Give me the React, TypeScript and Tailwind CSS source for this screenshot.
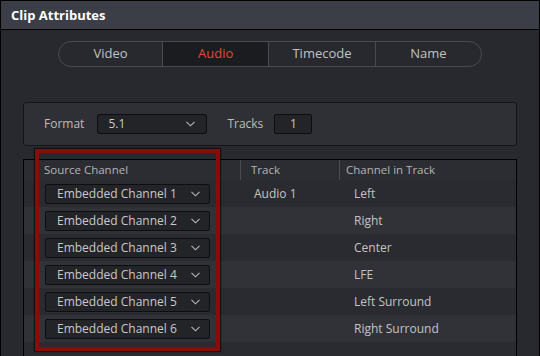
import React from 'react';

const Chevron = () => (
  <svg width="9" height="6" viewBox="0 0 9 6" className="shrink-0">
    <polyline points="0.5,0.8 4.5,4.8 8.5,0.8" fill="none" stroke="#b8b8b8" strokeWidth="1.1" />
  </svg>
);

const Select = ({ value, className }: { value: string; className: string }) => (
  <div
    className={`flex items-center justify-between h-[20px] bg-[#232428] border border-[#0e0e10] rounded-[2px] text-[12px] text-[#c9c9c9] ${className}`}
  >
    <span className="leading-none">{value}</span>
    <Chevron />
  </div>
);

const tabs = ['Video', 'Audio', 'Timecode', 'Name'];

const rows = [
  { src: 'Embedded Channel 1', track: 'Audio 1', ch: 'Left' },
  { src: 'Embedded Channel 2', track: '', ch: 'Right' },
  { src: 'Embedded Channel 3', track: '', ch: 'Center' },
  { src: 'Embedded Channel 4', track: '', ch: 'LFE' },
  { src: 'Embedded Channel 5', track: '', ch: 'Left Surround' },
  { src: 'Embedded Channel 6', track: '', ch: 'Right Surround' },
];

export default function App() {
  return (
    <div className="relative w-[540px] h-[356px] overflow-hidden bg-[#28292e] border-x border-t border-black font-['Open_Sans',sans-serif] flex flex-col">
      <header className="h-[29px] shrink-0 bg-[#3b3e47] border-b border-black flex items-center pl-[10px]">
        <h1 className="text-[13px] font-bold text-white leading-none">Clip Attributes</h1>
      </header>

      <div className="flex justify-center pt-[11px]">
        <div className="flex w-[424px] h-[26px] border border-[#4a4b51] rounded-full overflow-hidden">
          {tabs.map((t, i) => (
            <div
              key={t}
              className={`flex items-center justify-center text-[13px] ${
                i === 0 ? 'w-[103px]' : 'flex-1'
              } ${i > 0 ? 'border-l border-[#4a4b51]' : ''} ${
                t === 'Audio' ? 'bg-[#1b1c1f] text-[#e8463a]' : 'text-[#c2c2c2]'
              }`}
            >
              {t}
            </div>
          ))}
        </div>
      </div>

      <div className="mx-[22px] mt-[35px] h-[44px] shrink-0 bg-[#2f3035] border border-[#141416] rounded-[3px] flex items-center pl-[20px]">
        <span className="text-[12px] text-[#bdbdbd] mr-[13px]">Format</span>
        <Select value="5.1" className="w-[110px] pl-[10px] pr-[11px]" />
        <span className="text-[12px] text-[#bdbdbd] ml-[20px] mr-[11px]">Tracks</span>
        <div className="w-[38px] h-[20px] bg-[#232428] border border-[#0e0e10] rounded-[2px] flex items-center justify-center text-[12px] text-[#c9c9c9]">
          1
        </div>
      </div>

      <div className="mx-[22px] mt-[13px] flex-1 border-x border-t border-black bg-[#2a2b30] flex flex-col">
        <div className="flex h-[20px] bg-[#2c2d32] text-[11.5px] text-[#b4b4b4]">
          <div className="w-[217px] flex items-center pl-[20px] border-r border-[#4a4b50]">Source Channel</div>
          <div className="w-[99px] flex items-center pl-[10px] border-r border-[#4a4b50]">Track</div>
          <div className="flex-1 flex items-center pl-[6px]">Channel in Track</div>
        </div>
        {rows.map((r, i) => (
          <div
            key={r.src}
            className={`flex h-[27px] items-center text-[12px] text-[#c4c4c4] ${
              i % 2 === 0 ? 'bg-[#2a2b30]' : 'bg-[#313238]'
            }`}
          >
            <div className="w-[217px] pl-[21px]">
              <Select value={r.src} className="w-[165px] pl-[11px] pr-[9px]" />
            </div>
            <div className="w-[99px] pl-[13px]">{r.track}</div>
            <div className="flex-1 pl-[14px]">{r.ch}</div>
          </div>
        ))}
      </div>

      <div className="absolute left-[34px] top-[148px] w-[185px] h-[202px] border-[4px] border-[#8c0a0a] shadow-[0_0_1px_1px_rgba(0,0,0,0.6)] pointer-events-none" />
    </div>
  );
}
